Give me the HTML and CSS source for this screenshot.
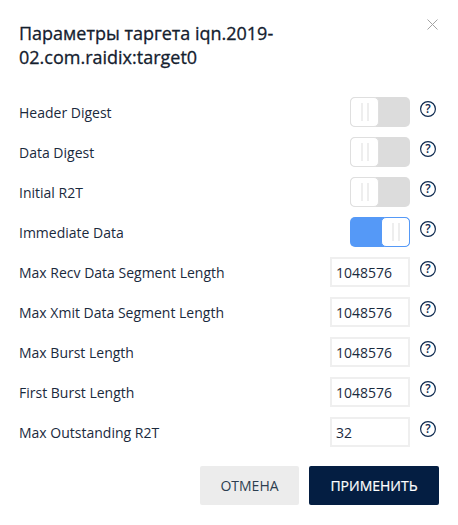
FILE: index.html
```html
<!DOCTYPE html>
<html lang="en">
<head>
  <meta charset="UTF-8" />
  <title>Параметры таргета</title>
  <link rel="stylesheet" href="styles.css">
</head>
<body>
  <div class="modal">
    <div class="modal-head">
      <h2 class="modal-title">Параметры таргета iqn.2019-02.com.raidix:target0</h2>
      <svg class="close" width="11" height="11" viewBox="0 0 11 11"><path d="M.5.5l10 10M10.5.5l-10 10" stroke="#a3a3a3" fill="none"/></svg>
    </div>

    <div class="rows">
      <div class="row">
        <span class="label">Header Digest</span>
        <span class="toggle"><span class="knob"><i></i><i></i></span></span>
        <svg class="help" width="18" height="18" viewBox="0 0 18 18"><circle cx="9" cy="9" r="7.4" fill="none" stroke="#0e2a4f" stroke-width="1.2"/><text x="9" y="13" text-anchor="middle" class="help-q">?</text></svg>
      </div>
      <div class="row">
        <span class="label">Data Digest</span>
        <span class="toggle"><span class="knob"><i></i><i></i></span></span>
        <svg class="help" width="18" height="18" viewBox="0 0 18 18"><circle cx="9" cy="9" r="7.4" fill="none" stroke="#0e2a4f" stroke-width="1.2"/><text x="9" y="13" text-anchor="middle" class="help-q">?</text></svg>
      </div>
      <div class="row">
        <span class="label">Initial R2T</span>
        <span class="toggle"><span class="knob"><i></i><i></i></span></span>
        <svg class="help" width="18" height="18" viewBox="0 0 18 18"><circle cx="9" cy="9" r="7.4" fill="none" stroke="#0e2a4f" stroke-width="1.2"/><text x="9" y="13" text-anchor="middle" class="help-q">?</text></svg>
      </div>
      <div class="row">
        <span class="label">Immediate Data</span>
        <span class="toggle on"><span class="knob"><i></i><i></i></span></span>
        <svg class="help" width="18" height="18" viewBox="0 0 18 18"><circle cx="9" cy="9" r="7.4" fill="none" stroke="#0e2a4f" stroke-width="1.2"/><text x="9" y="13" text-anchor="middle" class="help-q">?</text></svg>
      </div>
      <div class="row">
        <span class="label">Max Recv Data Segment Length</span>
        <input class="field" value="1048576">
        <svg class="help" width="18" height="18" viewBox="0 0 18 18"><circle cx="9" cy="9" r="7.4" fill="none" stroke="#0e2a4f" stroke-width="1.2"/><text x="9" y="13" text-anchor="middle" class="help-q">?</text></svg>
      </div>
      <div class="row">
        <span class="label">Max Xmit Data Segment Length</span>
        <input class="field" value="1048576">
        <svg class="help" width="18" height="18" viewBox="0 0 18 18"><circle cx="9" cy="9" r="7.4" fill="none" stroke="#0e2a4f" stroke-width="1.2"/><text x="9" y="13" text-anchor="middle" class="help-q">?</text></svg>
      </div>
      <div class="row">
        <span class="label">Max Burst Length</span>
        <input class="field" value="1048576">
        <svg class="help" width="18" height="18" viewBox="0 0 18 18"><circle cx="9" cy="9" r="7.4" fill="none" stroke="#0e2a4f" stroke-width="1.2"/><text x="9" y="13" text-anchor="middle" class="help-q">?</text></svg>
      </div>
      <div class="row">
        <span class="label">First Burst Length</span>
        <input class="field" value="1048576">
        <svg class="help" width="18" height="18" viewBox="0 0 18 18"><circle cx="9" cy="9" r="7.4" fill="none" stroke="#0e2a4f" stroke-width="1.2"/><text x="9" y="13" text-anchor="middle" class="help-q">?</text></svg>
      </div>
      <div class="row">
        <span class="label">Max Outstanding R2T</span>
        <input class="field" value="32">
        <svg class="help" width="18" height="18" viewBox="0 0 18 18"><circle cx="9" cy="9" r="7.4" fill="none" stroke="#0e2a4f" stroke-width="1.2"/><text x="9" y="13" text-anchor="middle" class="help-q">?</text></svg>
      </div>
    </div>

    <div class="actions">
      <button class="btn btn-cancel">ОТМЕНА</button>
      <button class="btn btn-apply">ПРИМЕНИТЬ</button>
    </div>
  </div>
</body>
</html>
```

FILE: styles.css
```css
* {
  margin: 0;
  padding: 0;
  box-sizing: border-box;
}
html, body {
  width: 100%;
  height: 100%;
  overflow: hidden;
  background: #fff;
  font-family: "Open Sans", sans-serif;
  color: #1a2a3d;
}

.modal {
  padding: 21px 21px 0 19px;
}

/* Header */
.modal-head {
  display: flex;
  justify-content: space-between;
  align-items: flex-start;
  height: 71px;
}
.modal-title {
  width: 270px;
  font-size: 18px;
  font-weight: 500;
  line-height: 24px;
  color: #14202e;
  -webkit-text-stroke: 0.3px #14202e;
}
.close {
  margin: -2px -1px 0 0;
}

/* Rows */
.rows {
  display: flex;
  flex-direction: column;
}
.row {
  display: flex;
  align-items: center;
  height: 40px;
}
.label {
  flex: 1;
  font-size: 14px;
}
.help {
  margin: -6px 0 0 9px;
}
.help-q {
  font-family: "Open Sans", sans-serif;
  font-size: 12px;
  font-weight: 600;
  fill: #0e2a4f;
}

/* Toggles */
.toggle {
  display: flex;
  width: 60px;
  height: 30px;
  background: #dcdcdc;
  border-radius: 5px;
}
.knob {
  display: flex;
  justify-content: center;
  align-items: center;
  gap: 4px;
  width: 29px;
  height: 30px;
  background: #fff;
  border: 1px solid #dfdfdf;
  border-radius: 5px;
}
.knob i {
  width: 2px;
  height: 18px;
  background: #eee;
}
.toggle.on {
  justify-content: flex-end;
  background: #5599f7;
}
.toggle.on .knob {
  border-color: #5599f7;
}

/* Inputs */
.field {
  width: 80px;
  height: 30px;
  padding: 0 4px;
  border: 2px solid #efefef;
  outline: none;
  font-family: "Open Sans", sans-serif;
  font-size: 14px;
  color: #1a2a3d;
}

/* Buttons */
.actions {
  display: flex;
  justify-content: flex-end;
  gap: 10px;
  margin: 14px -2px 0 0;
}
.btn {
  height: 39px;
  border: none;
  border-radius: 2px;
  font-family: "Open Sans", sans-serif;
  font-size: 14px;
  font-weight: 500;
}
.btn-cancel {
  width: 99px;
  background: #ececec;
  color: #2c3e50;
  font-weight: 400;
}
.btn-apply {
  width: 130px;
  background: #041e42;
  color: #fff;
  -webkit-text-stroke: 0.2px #fff;
}
```
